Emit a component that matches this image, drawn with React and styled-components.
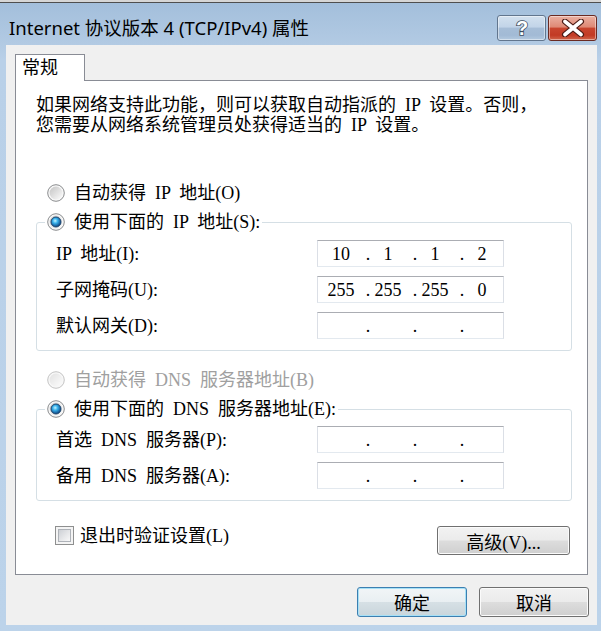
import React, { useId } from 'react';
import styled, { createGlobalStyle } from 'styled-components';

const BODY_FONT = `"Liberation Serif", "Noto Sans CJK SC", serif`;

const Global = createGlobalStyle`
  html, body { margin: 0; padding: 0; }
  body { width: 601px; height: 631px; overflow: hidden; background: #bcd3ea; }
  *, *::before, *::after { box-sizing: border-box; }
`;

const Window = styled.div`
  width: 601px;
  height: 631px;
  display: flex;
  flex-direction: column;
  background: linear-gradient(to bottom, #a2bedb 0px, #b2cae3 44px, #b9d0e8 60px, #bcd3ea 100%);
`;

const TopStrip = styled.div`
  height: 3px;
  flex: none;
  background: #d6d6d6;
  border-bottom: 1px solid #4f4f4f;
`;

const TitleBar = styled.div`
  height: 42px;
  flex: none;
  display: flex;
  align-items: flex-start;
  padding: 12px 4px 0 9px;
`;

const Title = styled.div`
  flex: 1;
  font-family: "Noto Sans", "Noto Sans CJK SC", sans-serif;
  font-size: 18.5px;
  line-height: 26px;
  color: #000;
  white-space: nowrap;
`;

const CaptionButtons = styled.div`
  display: flex;
  gap: 2px;
`;

const CaptionButton = styled.div`
  width: 49px;
  height: 26px;
  border-radius: 3px;
  display: flex;
  align-items: center;
  justify-content: center;
  border: 1px solid ${(p) => (p.$close ? '#6a2a22' : '#62768e')};
  background: ${(p) =>
    p.$close
      ? 'linear-gradient(to bottom, #eab0a2 0%, #df8a76 45%, #c8452e 52%, #c23a24 80%, #d0654a 100%)'
      : 'linear-gradient(to bottom, #d3e1ef 0%, #c2d4e8 45%, #a6bdd7 52%, #a2bad5 80%, #b4cae0 100%)'};
  box-shadow: inset 0 0 0 1px rgba(255, 255, 255, 0.45);
`;

const Client = styled.div`
  flex: 1;
  margin: 0 4px 6px 6px;
  background: #f0f0f0;
  padding: 9px 8px 8px 9px;
  display: flex;
  flex-direction: column;
  font-family: ${BODY_FONT};
  font-size: 18px;
  color: #000;
  word-spacing: 4.5px;
`;

const TabStrip = styled.div`
  display: flex;
  flex: none;
`;

const Tab = styled.div`
  position: relative;
  z-index: 1;
  width: 70px;
  height: 27px;
  margin-bottom: -1px;
  padding-left: 6px;
  line-height: 26px;
  background: #fff;
  border: 1px solid #898c95;
  border-bottom: none;
`;

const Panel = styled.div`
  flex: none;
  height: 495px;
  margin-right: 1px;
  background: #fff;
  border: 1px solid #898c95;
  padding: 14px 15px 0 20px;
  display: flex;
  flex-direction: column;
`;

const Intro = styled.p`
  margin: 0;
  line-height: 20px;
  white-space: nowrap;
`;

const RadioRow = styled.div`
  height: 24px;
  margin: ${(p) => p.$mt || 0}px 0 0 11px;
  display: flex;
  align-items: center;
  gap: 9px;
  line-height: 18px;
  color: ${(p) => (p.$disabled ? '#a0a0a0' : '#000')};
`;

const Group = styled.fieldset`
  margin: 5px 0 0 0;
  min-width: 0;
  border: 1px solid #d5dfe5;
  border-radius: 3px;
  padding: ${(p) => p.$pt}px 67px 11px 19px;
`;

const Legend = styled.legend`
  margin-left: -11px;
  padding: 0 2px;
  line-height: 18px;
`;

const LegendInner = styled.span`
  height: 24px;
  display: flex;
  align-items: center;
  gap: 9px;
`;

const FieldGrid = styled.div`
  display: grid;
  grid-template-columns: 1fr 187px;
  grid-auto-rows: 27px;
  row-gap: 9px;
  align-items: center;
`;

const FieldLabel = styled.span`
  line-height: 18px;
  white-space: nowrap;
`;

const IpBox = styled.div`
  height: 27px;
  display: flex;
  align-items: center;
  padding-left: 6px;
  background: #fff;
  border: 1px solid #dbdfe6;
  border-top-color: #abadb3;
  border-bottom-color: #e3e9ef;
  line-height: 24px;
  word-spacing: 0;
`;

const Octet = styled.span`
  width: 34px;
  display: flex;
  justify-content: center;
`;

const Dot = styled.span`
  width: 13px;
  padding-left: 7px;
  display: flex;
  justify-content: center;
`;

const BottomRow = styled.div`
  margin-top: 25px;
  padding: 0 2px 0 19px;
  display: flex;
  justify-content: space-between;
  align-items: flex-start;
`;

const CheckLabel = styled.label`
  display: flex;
  align-items: center;
  gap: 6px;
  height: 19px;
  line-height: 18px;
`;

const CheckBox = styled.span`
  width: 19px;
  height: 19px;
  border: 1px solid #8e8f8f;
  background: #f4f4f4;
  padding: 2px;
  display: flex;
`;

const CheckInner = styled.span`
  flex: 1;
  border: 1px solid #aeb2b8;
  background: linear-gradient(135deg, #cdd0d5 0%, #e6e7e9 55%, #f8f8f8 100%);
`;

const Button = styled.button`
  width: ${(p) => p.$w}px;
  height: ${(p) => p.$h}px;
  padding: 0;
  font-family: ${BODY_FONT};
  font-size: 18px;
  word-spacing: 4.5px;
  color: #000;
  border-radius: 3px;
  border: 1px solid ${(p) => (p.$focus ? '#3c7fb1' : '#707070')};
  background: ${(p) =>
    p.$focus
      ? 'linear-gradient(to bottom, #f1f5f7 0%, #e9eff2 49%, #d6e0e5 51%, #c9d5db 100%)'
      : 'linear-gradient(to bottom, #f2f2f2 0%, #ebebeb 49%, #dddddd 51%, #cfcfcf 100%)'};
  box-shadow: inset 0 0 0 1px ${(p) => (p.$focus ? '#a6e0f6' : '#fbfbfb')};
  display: flex;
  align-items: center;
  justify-content: center;
`;

const ButtonRow = styled.div`
  margin-top: 12px;
  display: flex;
  justify-content: flex-end;
  gap: 12px;
`;

function RadioIcon({ checked, disabled }) {
  const id = useId().replace(/:/g, '');
  return (
    <svg width="18" height="18" viewBox="0 0 18 18" style={{ flex: 'none', display: 'block' }}>
      <defs>
        <linearGradient id={`f${id}`} x1="0" y1="0" x2="1" y2="1">
          <stop offset="0" stopColor={disabled ? '#e2e2e2' : '#c4c4c4'} />
          <stop offset="1" stopColor="#fcfcfc" />
        </linearGradient>
        <radialGradient id={`d${id}`} cx="0.42" cy="0.38" r="0.7">
          <stop offset="0" stopColor="#c4f3ff" />
          <stop offset="0.35" stopColor="#38b2ec" />
          <stop offset="0.8" stopColor="#13528f" />
          <stop offset="1" stopColor="#0b3764" />
        </radialGradient>
      </defs>
      <circle cx="9" cy="9" r="8.3" fill="#f7f7f7" stroke={disabled ? '#c4c4c4' : '#8a8c8e'} />
      <circle cx="9" cy="9" r="6.4" fill={`url(#f${id})`} />
      {checked && <circle cx="9" cy="9" r="5" fill={`url(#d${id})`} stroke="#173f69" strokeWidth="0.9" />}
    </svg>
  );
}

function IpField({ parts }) {
  return (
    <IpBox>
      {parts.map((p, i) => (
        <React.Fragment key={i}>
          <Octet>{p}</Octet>
          {i < 3 && <Dot>.</Dot>}
        </React.Fragment>
      ))}
    </IpBox>
  );
}

const EMPTY = ['', '', '', ''];

const ipRows = [
  { label: 'IP 地址(I):', parts: ['10', '1', '1', '2'] },
  { label: '子网掩码(U):', parts: ['255', '255', '255', '0'] },
  { label: '默认网关(D):', parts: EMPTY },
];

const dnsRows = [
  { label: '首选 DNS 服务器(P):', parts: EMPTY },
  { label: '备用 DNS 服务器(A):', parts: EMPTY },
];

export default function App() {
  return (
    <>
      <Global />
      <Window>
        <TopStrip />
        <TitleBar>
          <Title>Internet 协议版本 4 (TCP/IPv4) 属性</Title>
          <CaptionButtons>
            <CaptionButton>
              <svg width="20" height="22" viewBox="0 0 20 22">
                <text
                  x="10"
                  y="18"
                  textAnchor="middle"
                  fontFamily="Liberation Sans, sans-serif"
                  fontWeight="bold"
                  fontSize="20"
                  fill="#fff"
                  stroke="#3d4c5e"
                  strokeWidth="1.6"
                  paintOrder="stroke"
                >
                  ?
                </text>
              </svg>
            </CaptionButton>
            <CaptionButton $close>
              <svg width="24" height="18" viewBox="0 0 24 18">
                <path d="M4 2.5 L20 15.5 M20 2.5 L4 15.5" stroke="#4a1a14" strokeWidth="6" strokeLinecap="round" />
                <path d="M4 2.5 L20 15.5 M20 2.5 L4 15.5" stroke="#fff" strokeWidth="3.6" strokeLinecap="round" />
              </svg>
            </CaptionButton>
          </CaptionButtons>
        </TitleBar>
        <Client>
          <TabStrip>
            <Tab>常规</Tab>
          </TabStrip>
          <Panel>
            <Intro>
              如果网络支持此功能，则可以获取自动指派的 IP 设置。否则，
              <br />
              您需要从网络系统管理员处获得适当的 IP 设置。
            </Intro>
            <RadioRow $mt={46}>
              <RadioIcon />
              <span>自动获得 IP 地址(O)</span>
            </RadioRow>
            <Group $pt={6}>
              <Legend>
                <LegendInner>
                  <RadioIcon checked />
                  <span>使用下面的 IP 地址(S):</span>
                </LegendInner>
              </Legend>
              <FieldGrid>
                {ipRows.map((r) => (
                  <React.Fragment key={r.label}>
                    <FieldLabel>{r.label}</FieldLabel>
                    <IpField parts={r.parts} />
                  </React.Fragment>
                ))}
              </FieldGrid>
            </Group>
            <RadioRow $mt={17} $disabled>
              <RadioIcon disabled />
              <span>自动获得 DNS 服务器地址(B)</span>
            </RadioRow>
            <Group $pt={5}>
              <Legend>
                <LegendInner>
                  <RadioIcon checked />
                  <span>使用下面的 DNS 服务器地址(E):</span>
                </LegendInner>
              </Legend>
              <FieldGrid>
                {dnsRows.map((r) => (
                  <React.Fragment key={r.label}>
                    <FieldLabel>{r.label}</FieldLabel>
                    <IpField parts={r.parts} />
                  </React.Fragment>
                ))}
              </FieldGrid>
            </Group>
            <BottomRow>
              <CheckLabel>
                <CheckBox>
                  <CheckInner />
                </CheckBox>
                <span>退出时验证设置(L)</span>
              </CheckLabel>
              <Button $w={133} $h={29}>高级(V)...</Button>
            </BottomRow>
          </Panel>
          <ButtonRow>
            <Button $w={110} $h={30} $focus>确定</Button>
            <Button $w={110} $h={30}>取消</Button>
          </ButtonRow>
        </Client>
      </Window>
    </>
  );
}
